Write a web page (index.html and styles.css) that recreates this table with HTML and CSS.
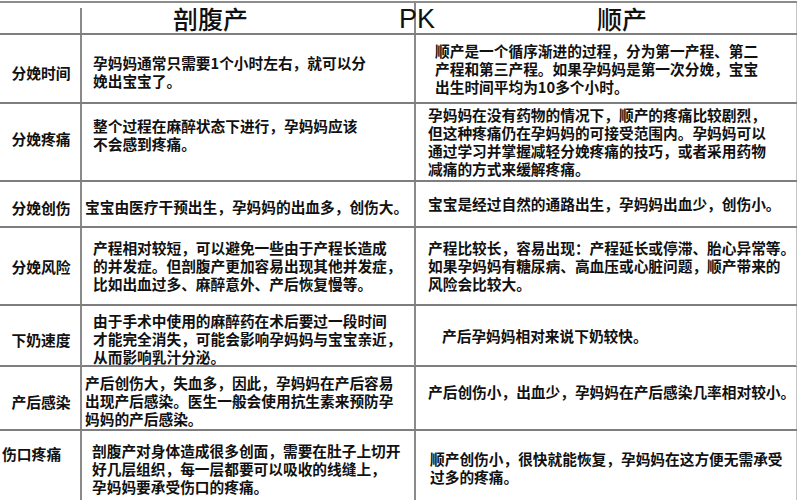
FILE: index.html
```html
<!DOCTYPE html>
<html lang="zh-CN">
<head>
<meta charset="utf-8">
<title>剖腹产 PK 顺产</title>
<link rel="stylesheet" href="styles.css">
</head>
<body>
<div class="table">
  <div class="row head">
    <div class="label head-label"></div>
    <div class="cell head-left">剖腹产</div>
    <div class="cell head-right">顺产</div>
    <span class="pk">PK</span>
  </div>

  <div class="row r1">
    <div class="label lab-low">分娩时间</div>
    <div class="cell left pl-wide shift-down">孕妈妈通常只需要1个小时左右，就可以分<br>娩出宝宝了。</div>
    <div class="cell right pr-wide">顺产是一个循序渐进的过程，分为第一产程、第二<br>产程和第三产程。如果孕妈妈是第一次分娩，宝宝<br>出生时间平均为10多个小时。</div>
  </div>

  <div class="row r2">
    <div class="label lab-high">分娩疼痛</div>
    <div class="cell left top">整个过程在麻醉状态下进行，孕妈妈应该<br>不会感到疼痛。</div>
    <div class="cell right">孕妈妈在没有药物的情况下，顺产的疼痛比较剧烈，<br>但这种疼痛仍在孕妈妈的可接受范围内。孕妈妈可以<br>通过学习并掌握减轻分娩疼痛的技巧，或者采用药物<br>减痛的方式来缓解疼痛。</div>
  </div>

  <div class="row r3">
    <div class="label lab-low">分娩创伤</div>
    <div class="cell left pl-narrow shift-down">宝宝由医疗干预出生，孕妈妈的出血多，创伤大。</div>
    <div class="cell right">宝宝是经过自然的通路出生，孕妈妈出血少，创伤小。</div>
  </div>

  <div class="row r4">
    <div class="label">分娩风险</div>
    <div class="cell left">产程相对较短，可以避免一些由于产程长造成<br>的并发症。但剖腹产更加容易出现其他并发症，<br>比如出血过多、麻醉意外、产后恢复慢等。</div>
    <div class="cell right">产程比较长，容易出现：产程延长或停滞、胎心异常等。<br>如果孕妈妈有糖尿病、高血压或心脏问题，顺产带来的<br>风险会比较大。</div>
  </div>

  <div class="row r5">
    <div class="label lab-low">下奶速度</div>
    <div class="cell left shift-down">由于手术中使用的麻醉药在术后要过一段时间<br>才能完全消失，可能会影响孕妈妈与宝宝亲近，<br>从而影响乳汁分泌。</div>
    <div class="cell right pr-xwide">产后孕妈妈相对来说下奶较快。</div>
  </div>

  <div class="row r6">
    <div class="label lab-low">产后感染</div>
    <div class="cell left pl-narrow shift-down">产后创伤大，失血多，因此，孕妈妈在产后容易<br>出现产后感染。医生一般会使用抗生素来预防孕<br>妈妈的产后感染。</div>
    <div class="cell right shift-up">产后创伤小，出血少，孕妈妈在产后感染几率相对较小。</div>
  </div>

  <div class="row r7">
    <div class="label top lab-top">伤口疼痛</div>
    <div class="cell left top l7">剖腹产对身体造成很多创面，需要在肚子上切开<br>好几层组织，每一层都要可以吸收的线缝上，<br>孕妈妈要承受伤口的疼痛。</div>
    <div class="cell right top r7c">顺产创伤小，很快就能恢复，孕妈妈在这方便无需承受<br>过多的疼痛。</div>
  </div>
</div>
</body>
</html>
```

FILE: styles.css
```css
* { box-sizing: border-box; }

html, body {
  margin: 0;
  padding: 0;
  background: #ffffff;
  overflow: hidden;
}

body {
  width: 800px;
  height: 500px;
  font-family: "Noto Sans CJK SC", "Noto Sans CJK TC", sans-serif;
  color: #111111;
}

.table {
  margin-top: 1px;
  border-top: 2px solid #8c8c8c;
  width: 797px;
}

.row {
  display: grid;
  grid-template-columns: 82px 334px 381px;
  border-bottom: 2px solid #7e7e7e;
  position: relative;
}

.label {
  border-right: 2px solid #8a8a8a;
  display: flex;
  align-items: center;
  justify-content: center;
  font-size: 14.8px;
  font-weight: 700;
  padding-left: 2px;
  white-space: nowrap;
}

.cell {
  display: flex;
  flex-direction: column;
  justify-content: center;
  font-size: 14.7px;
  line-height: 18px;
  font-weight: 700;
  white-space: nowrap;
}

.cell.left {
  border-right: 2px solid #8a8a8a;
  padding-left: 11px;
  overflow: visible;
  position: relative;
  z-index: 1;
}

.cell.right {
  padding-left: 12px;
  border-right: 1px solid #c4c4c4;
}

/* header */
.head { height: 32px; }
.head-label { margin-top: 5px; }
.head-left {
  font-size: 25px;
  line-height: 30px;
  font-weight: 500;
  padding-left: 91px;
  border-right: 2px solid #8a8a8a;
}
.head-right {
  font-size: 25px;
  line-height: 30px;
  font-weight: 500;
  padding-left: 181px;
  border-right: 1px solid #c4c4c4;
}
.pk {
  position: absolute;
  left: 399px;
  top: 1px;
  font-family: "Liberation Sans", Arial, sans-serif;
  font-size: 27px;
  line-height: 30px;
  color: #111;
  z-index: 2;
}

/* rows */
.r1 { height: 69px; }
.r2 { height: 78px; }
.r3 { height: 46px; }
.r4 { height: 78px; }
.r5 { height: 61px; }
.r6 { height: 64px; }
.r7 { height: 80px; }

/* alignment modifiers */
.top { justify-content: flex-start; align-items: flex-start; }
.label.top { align-items: flex-start; }
.cell.top { padding-top: 13px; }
.lab-low { padding-top: 7px; }
.lab-high { padding-bottom: 8px; }
.lab-top { padding-top: 12px; }
.shift-down { padding-top: 6px; }
.shift-up { padding-bottom: 12px; }
.pl-wide { padding-left: 13px; }
.cell.left.pl-narrow { padding-left: 3px; }
.cell.right.pr-wide { padding-left: 19px; }
.cell.right.pr-xwide { padding-left: 26px; }
.cell.left.l7 { padding-top: 11px; padding-left: 10px; }
.cell.right.r7c { padding-top: 19px; padding-left: 14px; }
```
